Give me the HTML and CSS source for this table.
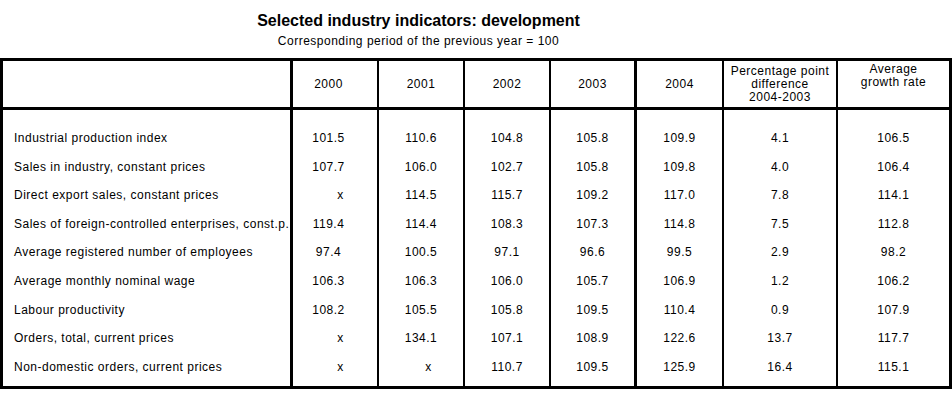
FILE: index.html
```html
<!DOCTYPE html>
<html lang="en">
<head>
<meta charset="utf-8">
<title>Selected industry indicators: development</title>
<link rel="stylesheet" href="styles.css">
</head>
<body>
<div class="page">
  <header class="caption">
    <h1 class="title">Selected industry indicators: development</h1>
    <p class="subtitle">Corresponding period of the previous year = 100</p>
  </header>
  <div class="sheet">
    <div class="row head">
      <div class="cell"></div>
      <div class="cell">2000</div>
      <div class="cell">2001</div>
      <div class="cell">2002</div>
      <div class="cell">2003</div>
      <div class="cell">2004</div>
      <div class="cell">Percentage point<br>difference<br>2004-2003</div>
      <div class="cell avg-head">Average<br>growth rate</div>
    </div>
    <div class="row first">
      <div class="cell">Industrial production index</div>
      <div class="cell">101.5</div><div class="cell">110.6</div><div class="cell">104.8</div><div class="cell">105.8</div><div class="cell">109.9</div><div class="cell">4.1</div><div class="cell">106.5</div>
    </div>
    <div class="row">
      <div class="cell">Sales in industry, constant prices</div>
      <div class="cell">107.7</div><div class="cell">106.0</div><div class="cell">102.7</div><div class="cell">105.8</div><div class="cell">109.8</div><div class="cell">4.0</div><div class="cell">106.4</div>
    </div>
    <div class="row">
      <div class="cell">Direct export sales, constant prices</div>
      <div class="cell"><span class="na">x</span></div><div class="cell">114.5</div><div class="cell">115.7</div><div class="cell">109.2</div><div class="cell">117.0</div><div class="cell">7.8</div><div class="cell">114.1</div>
    </div>
    <div class="row">
      <div class="cell">Sales of foreign-controlled enterprises, const.p.</div>
      <div class="cell">119.4</div><div class="cell">114.4</div><div class="cell">108.3</div><div class="cell">107.3</div><div class="cell">114.8</div><div class="cell">7.5</div><div class="cell">112.8</div>
    </div>
    <div class="row">
      <div class="cell">Average registered number of employees</div>
      <div class="cell">97.4</div><div class="cell">100.5</div><div class="cell">97.1</div><div class="cell">96.6</div><div class="cell">99.5</div><div class="cell">2.9</div><div class="cell">98.2</div>
    </div>
    <div class="row">
      <div class="cell">Average monthly nominal wage</div>
      <div class="cell">106.3</div><div class="cell">106.3</div><div class="cell">106.0</div><div class="cell">105.7</div><div class="cell">106.9</div><div class="cell">1.2</div><div class="cell">106.2</div>
    </div>
    <div class="row">
      <div class="cell">Labour productivity</div>
      <div class="cell">108.2</div><div class="cell">105.5</div><div class="cell">105.8</div><div class="cell">109.5</div><div class="cell">110.4</div><div class="cell">0.9</div><div class="cell">107.9</div>
    </div>
    <div class="row">
      <div class="cell">Orders, total, current prices</div>
      <div class="cell"><span class="na">x</span></div><div class="cell">134.1</div><div class="cell">107.1</div><div class="cell">108.9</div><div class="cell">122.6</div><div class="cell">13.7</div><div class="cell">117.7</div>
    </div>
    <div class="row last">
      <div class="cell">Non-domestic orders, current prices</div>
      <div class="cell"><span class="na">x</span></div><div class="cell"><span class="na">x</span></div><div class="cell">110.7</div><div class="cell">109.5</div><div class="cell">125.9</div><div class="cell">16.4</div><div class="cell">115.1</div>
    </div>
  </div>
</div>
</body>
</html>
```

FILE: styles.css
```css
* { box-sizing: border-box; }

html, body {
  margin: 0;
  padding: 0;
  background: #ffffff;
}

body {
  font-family: "Liberation Sans", Arial, sans-serif;
  color: #000000;
  width: 952px;
}

.page {
  padding-top: 12px;
}

.caption {
  width: 837px;
  text-align: center;
}

.title {
  margin: 0;
  font-size: 16px;
  line-height: 18px;
  font-weight: bold;
}

.subtitle {
  margin: 4px 0 0;
  font-size: 12px;
  line-height: 14px;
  letter-spacing: 0.5px;
}

.sheet {
  margin-top: 10px;
  width: 952px;
  border: 3px solid #000;
  display: grid;
  grid-template-columns: 287px 87px 86px 86px 85px 88px 114px 113px;
  grid-template-rows: 49px 42.55px repeat(7, 28.55px) 33.55px;
  font-size: 12px;
  line-height: 14px;
  letter-spacing: 0.5px;
}

.row {
  display: contents;
}

.cell {
  display: flex;
  align-items: center;
  justify-content: center;
  text-align: center;
  white-space: nowrap;
  border-left: 2px solid #000;
}

.row > .cell:first-child {
  border-left: 0;
  justify-content: flex-start;
  text-align: left;
  padding-left: 11px;
}

.row > .cell:nth-child(2) {
  border-left-width: 3px;
  padding-right: 13px;
}

.row > .cell:nth-child(6) {
  border-left-width: 3px;
}

.head .cell {
  border-bottom: 3px solid #000;
  line-height: 13px;
}

.head .avg-head {
  padding-bottom: 16px;
}

.first .cell {
  padding-top: 14px;
}

.last .cell {
  padding-bottom: 5px;
}

.row > .cell:nth-child(2) .na {
  padding-left: 24px;
}

.row > .cell:nth-child(3) .na {
  padding-left: 15px;
}
```
